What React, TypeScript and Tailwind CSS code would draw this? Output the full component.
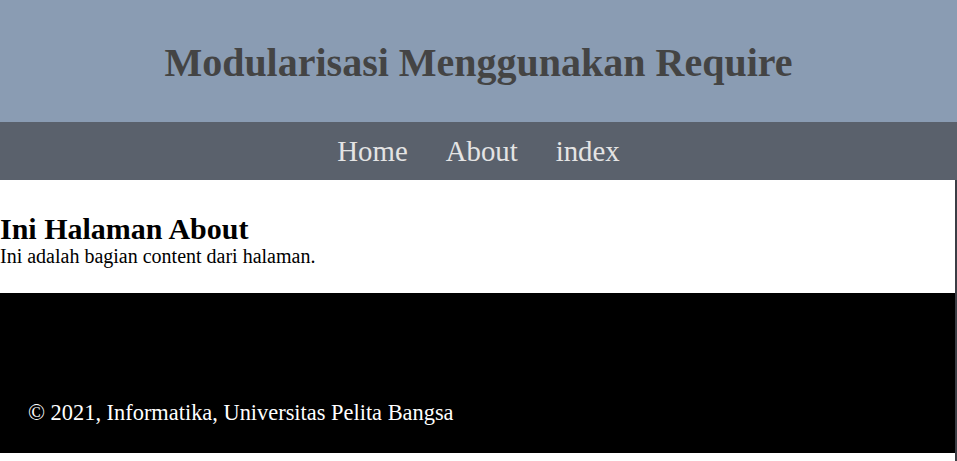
export default function App() {
  return (
    <div className="w-[957px] h-[461px] bg-white overflow-hidden" style={{ fontFamily: '"Liberation Serif", serif' }}>
      <header className="h-[122px] bg-[#8a9cb3] flex items-center justify-center">
        <h1 className="text-[40px] font-bold text-[#444444] leading-none pt-[3px]">Modularisasi Menggunakan Require</h1>
      </header>
      <nav className="h-[58px] bg-[#5a616c] flex items-center justify-center gap-[38px] text-[28.8px] text-[#e4e4e4] leading-none">
        <span>Home</span>
        <span>About</span>
        <span>index</span>
      </nav>
      <div className="border-r-2 border-[#3b3e45]">
        <main className="h-[113px] pt-[33px] text-black">
          <h2 className="text-[30px] font-bold leading-[32px]">Ini Halaman About</h2>
          <p className="text-[20px] leading-[22px]">Ini adalah bagian content dari halaman.</p>
        </main>
        <footer className="h-[160px] bg-black flex items-end pb-[29px] pl-[28px]">
          <p className="text-[22.4px] text-white leading-none">© 2021, Informatika, Universitas Pelita Bangsa</p>
        </footer>
        <div className="h-[8px] bg-white"></div>
      </div>
    </div>
  );
}
